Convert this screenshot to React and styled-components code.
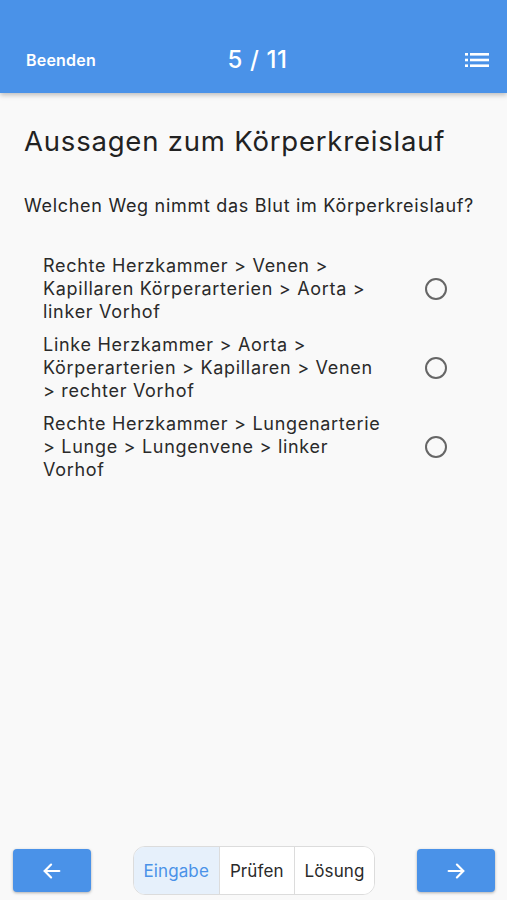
import styled, { createGlobalStyle } from "styled-components";

const GlobalStyle = createGlobalStyle`
  html, body {
    margin: 0;
    padding: 0;
    background: #f9f9f9;
  }
  body {
    font-family: Inter, "Noto Sans", sans-serif;
    color: #262626;
  }
`;

const options = [
  "Rechte Herzkammer > Venen > Kapillaren Körperarterien > Aorta > linker Vorhof",
  "Linke Herzkammer > Aorta > Körperarterien > Kapillaren > Venen > rechter Vorhof",
  "Rechte Herzkammer > Lungenarterie > Lunge > Lungenvene > linker Vorhof",
];

const modes = ["Eingabe", "Prüfen", "Lösung"];

const ListIcon = () => (
  <svg width="24" height="16" viewBox="0 0 24 16" fill="#fff">
    <rect x="0" y="1" width="3" height="2.6" />
    <rect x="0" y="6.7" width="3" height="2.6" />
    <rect x="0" y="12.4" width="3" height="2.6" />
    <rect x="5" y="1" width="19" height="2.6" />
    <rect x="5" y="6.7" width="19" height="2.6" />
    <rect x="5" y="12.4" width="19" height="2.6" />
  </svg>
);

const Arrow = ({ dir }) => (
  <svg width="22" height="22" viewBox="0 0 24 24" fill="none" stroke="#fff" strokeWidth="2.4" strokeLinecap="round" strokeLinejoin="round">
    {dir === "left" ? (
      <>
        <line x1="20" y1="12" x2="4" y2="12" />
        <polyline points="11,5 4,12 11,19" />
      </>
    ) : (
      <>
        <line x1="4" y1="12" x2="20" y2="12" />
        <polyline points="13,5 20,12 13,19" />
      </>
    )}
  </svg>
);

const App = () => {
  return (
    <Page>
      <GlobalStyle />
      <Header>
        <HeaderLink>Beenden</HeaderLink>
        <Counter>5 / 11</Counter>
        <IconButton>
          <ListIcon />
        </IconButton>
      </Header>
      <Content>
        <Title>Aussagen zum Körperkreislauf</Title>
        <Question>Welchen Weg nimmt das Blut im Körperkreislauf?</Question>
        <OptionList>
          {options.map((text) => (
            <Option key={text}>
              <OptionText>{text}</OptionText>
              <Radio />
            </Option>
          ))}
        </OptionList>
      </Content>
      <Footer>
        <NavButton>
          <Arrow dir="left" />
        </NavButton>
        <Segmented>
          {modes.map((mode, i) => (
            <Segment key={mode} $active={i === 0}>
              {mode}
            </Segment>
          ))}
        </Segmented>
        <NavButton>
          <Arrow dir="right" />
        </NavButton>
      </Footer>
    </Page>
  );
};

const Page = styled.div`
  display: flex;
  flex-direction: column;
  height: 900px;
  background: #f9f9f9;
`;

const Header = styled.header`
  height: 93px;
  background: #4a92e8;
  box-shadow: 0 2px 5px rgba(0, 0, 0, 0.25);
  display: flex;
  align-items: flex-end;
  justify-content: space-between;
  padding: 0 18px 22px 26px;
  box-sizing: border-box;
  color: #fff;
  position: relative;
  z-index: 1;
`;

const HeaderLink = styled.span`
  font-size: 16px;
  font-weight: 600;
  width: 90px;
  line-height: 22px;
  letter-spacing: 0.2px;
`;

const Counter = styled.span`
  font-size: 24px;
  font-weight: 500;
  line-height: 26px;
  letter-spacing: 0.6px;
  margin-bottom: -2px;
`;

const IconButton = styled.span`
  width: 90px;
  display: flex;
  justify-content: flex-end;
  padding-bottom: 3px;
`;

const Content = styled.main`
  flex: 1;
  padding: 30px 24px 0 24px;
`;

const Title = styled.h1`
  margin: 0;
  font-size: 27.5px;
  font-weight: 400;
  line-height: 36px;
  letter-spacing: 0.8px;
  color: #222;
`;

const Question = styled.p`
  margin: 35px 0 0 0;
  font-size: 18px;
  line-height: 24px;
  letter-spacing: 0.7px;
`;

const OptionList = styled.div`
  display: flex;
  flex-direction: column;
  gap: 10px;
  margin-top: 36px;
  padding-left: 19px;
`;

const Option = styled.div`
  display: flex;
  align-items: center;
`;

const OptionText = styled.div`
  width: 348px;
  font-size: 18px;
  line-height: 23px;
  letter-spacing: 0.7px;
  color: #2a2a2a;
`;

const Radio = styled.span`
  width: 18px;
  height: 18px;
  margin-left: 34px;
  border: 2px solid #666;
  border-radius: 50%;
`;

const Footer = styled.footer`
  display: flex;
  align-items: center;
  justify-content: space-between;
  padding: 0 12px 2px 13px;
  height: 57px;
  box-sizing: border-box;
`;

const NavButton = styled.button`
  width: 78px;
  height: 43px;
  border: none;
  border-radius: 4px;
  background: #4a92e8;
  box-shadow: 0 1px 3px rgba(0, 0, 0, 0.3);
  display: flex;
  align-items: center;
  justify-content: center;
  padding: 0;
`;

const Segmented = styled.div`
  display: flex;
  height: 49px;
  border: 1px solid #dcdcdc;
  border-radius: 12px;
  overflow: hidden;
  background: #fff;
  box-sizing: border-box;
`;

const Segment = styled.div`
  display: flex;
  align-items: center;
  padding: 0 10px;
  font-size: 17px;
  letter-spacing: 0.1px;
  color: ${(p) => (p.$active ? "#4a92e8" : "#2a2a2a")};
  background: ${(p) => (p.$active ? "#e6f0fb" : "#fff")};
  & + & {
    border-left: 1px solid #dcdcdc;
  }
`;

export default App;
